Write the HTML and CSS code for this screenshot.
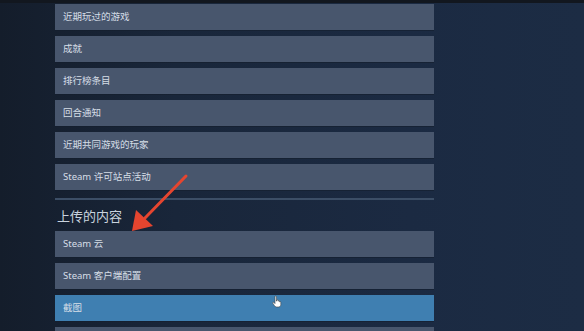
FILE: index.html
```html
<!DOCTYPE html>
<html lang="zh-CN">
<head>
  <meta charset="UTF-8" />
  <title>Steam 云</title>
  <link rel="stylesheet" href="styles.css">
</head>
<body>

  <div class="top-strip"></div>

  <div class="page">
    <!-- Notification options -->
    <div class="option-list">
      <div class="option">近期玩过的游戏</div>
      <div class="option">成就</div>
      <div class="option">排行榜条目</div>
      <div class="option">回合通知</div>
      <div class="option">近期共同游戏的玩家</div>
      <div class="option">Steam 许可站点活动</div>
    </div>

    <div class="divider"></div>

    <h2 class="section-title">上传的内容</h2>

    <div class="option-list">
      <div class="option">Steam 云</div>
      <div class="option">Steam 客户端配置</div>
      <div class="option active">截图</div>
      <div class="option"></div>
    </div>
  </div>

  <!-- Annotation arrow -->
  <svg class="arrow" width="584" height="331" viewBox="0 0 584 331">
    <line x1="186" y1="176" x2="145" y2="218" stroke="#e5452f" stroke-width="3" stroke-linecap="round"/>
    <polygon points="132,231 136,210 153,226" fill="#e5452f"/>
  </svg>

  <!-- Mouse cursor -->
  <svg class="cursor" width="10" height="13" viewBox="0 0 10 13">
    <path d="M3 1.5 C3 0.8 4.4 0.8 4.4 1.5 V6 H5 V5.2 C5 4.6 6.3 4.6 6.3 5.2 V6.2 C6.3 5.6 7.6 5.6 7.6 6.2 V7 C7.6 6.5 8.8 6.5 8.8 7.2 V9.5 C8.8 11 7.8 12 6.4 12 H4.6 C3.6 12 3 11.4 2.4 10.6 L0.8 8.2 C0.4 7.6 1.2 6.8 1.8 7.4 L3 8.6 Z" fill="#fff" stroke="#444" stroke-width="0.6"/>
  </svg>

</body>
</html>
```

FILE: styles.css
```css
* {
  box-sizing: border-box;
  margin: 0;
  padding: 0;
}

body {
  width: 584px;
  height: 331px;
  overflow: hidden;
  position: relative;
  font-family: "Noto Sans", "Noto Sans CJK SC", sans-serif;
  background: linear-gradient(to right, #141d2b 0%, #19263a 30%, #1b2a42 70%, #1c2c44 100%);
}

.top-strip {
  height: 3px;
  background: #12171f;
}

.page {
  width: 379px;
  height: 328px;
  overflow: hidden;
  margin-left: 55px;
  padding-top: 1px;
}

.option-list {
  display: flex;
  flex-direction: column;
  gap: 6px;
}

.option {
  height: 26px;
  flex-shrink: 0;
  line-height: 26px;
  padding-left: 8px;
  font-size: 9.5px;
  color: #d6dee7;
  background: #48566d;
  box-shadow: 0 1px 0 rgba(20, 30, 45, 0.6);
}

.option.active {
  background: #3f7fb1;
}

.divider {
  height: 2px;
  margin-top: 8px;
  background: #3c4e66;
}

.section-title {
  font-size: 13px;
  font-weight: normal;
  line-height: 18px;
  color: #c9d3de;
  padding: 7px 0 6px 2px;
}

.arrow {
  position: absolute;
  top: 0;
  left: 0;
}

.cursor {
  position: absolute;
  left: 272px;
  top: 295px;
}
```
